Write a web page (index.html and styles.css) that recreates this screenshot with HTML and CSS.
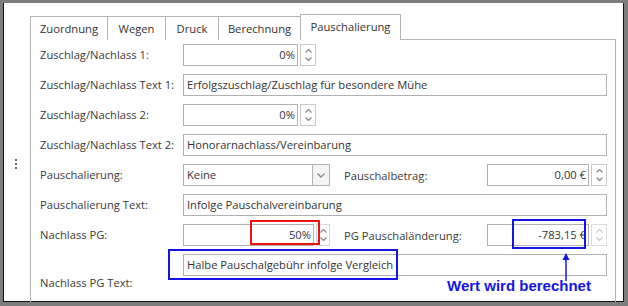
FILE: index.html
```html
<!DOCTYPE html>
<html lang="de">
<head>
  <meta charset="UTF-8">
  <title>Pauschalierung</title>
  <link rel="stylesheet" href="styles.css">
</head>
<body>
  <div class="window">
    <div class="grip">
      <svg width="4" height="12" viewBox="0 0 4 12"><rect x="1" y="0" width="2" height="2"/><rect x="1" y="4" width="2" height="2"/><rect x="1" y="8" width="2" height="2"/></svg>
    </div>

    <div class="tab-area">
      <div class="tabs">
        <div class="tab tab-1">Zuordnung</div>
        <div class="tab tab-2">Wegen</div>
        <div class="tab tab-3">Druck</div>
        <div class="tab tab-4">Berechnung</div>
        <div class="tab tab-5 active">Pauschalierung</div>
      </div>

      <div class="panel">
        <div class="form">
          <label>Zuschlag/Nachlass 1:</label>
          <div class="field short">
            <div class="input num">0%</div>
            <div class="spin">
              <svg width="7" height="4" viewBox="0 0 7 4"><path d="M0.5 3.5 L3.5 0.5 L6.5 3.5"/></svg>
              <svg width="7" height="4" viewBox="0 0 7 4"><path d="M0.5 0.5 L3.5 3.5 L6.5 0.5"/></svg>
            </div>
          </div>

          <label>Zuschlag/Nachlass Text 1:</label>
          <div class="input">Erfolgszuschlag/Zuschlag für besondere Mühe</div>

          <label>Zuschlag/Nachlass 2:</label>
          <div class="field short">
            <div class="input num">0%</div>
            <div class="spin">
              <svg width="7" height="4" viewBox="0 0 7 4"><path d="M0.5 3.5 L3.5 0.5 L6.5 3.5"/></svg>
              <svg width="7" height="4" viewBox="0 0 7 4"><path d="M0.5 0.5 L3.5 3.5 L6.5 0.5"/></svg>
            </div>
          </div>

          <label>Zuschlag/Nachlass Text 2:</label>
          <div class="input">Honorarnachlass/Vereinbarung</div>

          <label>Pauschalierung:</label>
          <div class="field">
            <div class="select">
              <span class="select-text">Keine</span>
              <span class="select-btn">
                <svg width="8" height="5" viewBox="0 0 8 5"><path d="M0.5 0.5 L4 4 L7.5 0.5"/></svg>
              </span>
            </div>
            <span class="sub-label">Pauschalbetrag:</span>
            <div class="input num grow">0,00 €</div>
            <div class="spin">
              <svg width="7" height="4" viewBox="0 0 7 4"><path d="M0.5 3.5 L3.5 0.5 L6.5 3.5"/></svg>
              <svg width="7" height="4" viewBox="0 0 7 4"><path d="M0.5 0.5 L3.5 3.5 L6.5 0.5"/></svg>
            </div>
          </div>

          <label>Pauschalierung Text:</label>
          <div class="input">Infolge Pauschalvereinbarung</div>

          <label>Nachlass PG:</label>
          <div class="field">
            <div class="left-group">
              <div class="input num grow">50%</div>
              <div class="spin narrow">
                <svg width="7" height="4" viewBox="0 0 7 4"><path d="M0.5 3.5 L3.5 0.5 L6.5 3.5"/></svg>
                <svg width="7" height="4" viewBox="0 0 7 4"><path d="M0.5 0.5 L3.5 3.5 L6.5 0.5"/></svg>
              </div>
            </div>
            <span class="sub-label">PG Pauschaländerung:</span>
            <div class="input num grow">-783,15 €</div>
            <div class="spin disabled">
              <svg width="7" height="4" viewBox="0 0 7 4"><path d="M0.5 3.5 L3.5 0.5 L6.5 3.5"/></svg>
              <svg width="7" height="4" viewBox="0 0 7 4"><path d="M0.5 0.5 L3.5 3.5 L6.5 0.5"/></svg>
            </div>
          </div>

          <label class="low">Nachlass PG Text:</label>
          <div class="input">Halbe Pauschalgebühr infolge Vergleich</div>
        </div>
      </div>
    </div>

    <!-- annotations drawn over the screenshot -->
    <div class="mark red mark-rabatt"></div>
    <div class="mark blue mark-wert"></div>
    <div class="mark blue mark-text"></div>
    <svg class="arrow" width="10" height="28" viewBox="0 0 10 28">
      <path d="M5 0 L8.5 7 L1.5 7 Z" fill="#1414e6"/>
      <line x1="5" y1="6" x2="5" y2="28" stroke="#1414e6" stroke-width="1.5"/>
    </svg>
    <div class="note">Wert wird berechnet</div>
  </div>
</body>
</html>
```

FILE: styles.css
```css
* {
  box-sizing: border-box;
}
body {
  margin: 0;
  background: #fff;
  font-family: "Open Sans", "Noto Sans", sans-serif;
  font-size: 11.2px;
  color: #3a3a3a;
}
.window {
  position: relative;
  width: 628px;
  height: 306px;
  display: flex;
  border-top: 3px solid #7d7d7d;
  border-left: 3px solid #7d7d7d;
  border-right: 4px solid #7d7d7d;
  border-bottom: 4px solid #7d7d7d;
  box-shadow: inset 1px 0 0 #111, inset -1px 0 0 #111, inset 0 -1px 0 #111;
  overflow: hidden;
}
.grip {
  width: 27px;
  flex: none;
  display: flex;
  justify-content: center;
  padding-top: 156px;
  padding-right: 2px;
}
.grip svg {
  fill: #6a6a6a;
}
.tab-area {
  flex: 1;
  display: flex;
  flex-direction: column;
  padding-top: 11px;
  margin-right: 8px;
}
.tabs {
  display: flex;
  align-items: flex-end;
  height: 26px;
  margin-bottom: -1px;
  position: relative;
  z-index: 1;
}
.tab {
  height: 24px;
  border: 1px solid #b4b4b4;
  border-bottom: none;
  background: #fff;
  display: flex;
  align-items: center;
  justify-content: center;
  margin-right: -1px;
  color: #333;
}
.tab-1 { width: 78px; }
.tab-2 { width: 59px; }
.tab-3 { width: 54px; }
.tab-4 { width: 83px; }
.tab-5 { width: 101px; }
.tab.active {
  height: 26px;
  padding-bottom: 2px;
}
.panel {
  flex: 1;
  border: 1px solid #b4b4b4;
  border-bottom: none;
  padding: 4px 8px 0 9px;
}
.form {
  display: grid;
  grid-template-columns: 143px 1fr;
  row-gap: 8px;
  align-items: start;
}
.form label {
  line-height: 22px;
  white-space: nowrap;
}
.form label.low {
  padding-top: 18px;
}
.input {
  height: 22px;
  border: 1px solid #b1b1b1;
  padding: 0 3px;
  line-height: 20px;
  white-space: nowrap;
  overflow: hidden;
  color: #333;
}
.input.num {
  text-align: right;
  padding-right: 2px;
}
.grow {
  flex: 1;
}
.field {
  display: flex;
  align-items: center;
  height: 22px;
}
.field.short .input {
  width: 115px;
  margin-right: 2px;
}
.spin {
  width: 16px;
  height: 22px;
  border: 1px solid #c9c9c9;
  display: flex;
  flex-direction: column;
  justify-content: space-between;
  align-items: center;
  padding: 4px 0;
  margin-left: 2px;
}
.field.short .spin {
  margin-left: 0;
}
.spin svg path,
.select-btn svg path {
  fill: none;
  stroke: #8a8a8a;
  stroke-width: 1.3;
}
.spin.narrow {
  width: 14px;
  border-color: #d6d6d6;
}
.spin.disabled {
  border-color: #dcdcdc;
}
.spin.disabled svg path {
  stroke: #c8c8c8;
}
.select {
  width: 147px;
  height: 22px;
  display: flex;
  border: 1px solid #b1b1b1;
}
.select-text {
  flex: 1;
  padding-left: 3px;
  line-height: 20px;
  color: #333;
}
.select-btn {
  width: 17px;
  border-left: 1px solid #b1b1b1;
  display: flex;
  align-items: center;
  justify-content: center;
  background: #f4f4f4;
}
.left-group {
  width: 147px;
  display: flex;
}
.sub-label {
  width: 143px;
  margin-left: 14px;
  white-space: nowrap;
}
.mark {
  position: absolute;
  border: 2px solid;
}
.red {
  border-color: #ee1111;
}
.blue {
  border-color: #1414e6;
}
.mark-rabatt {
  left: 247px;
  top: 217px;
  width: 70px;
  height: 25px;
}
.mark-wert {
  left: 509px;
  top: 216px;
  width: 74px;
  height: 30px;
}
.mark-text {
  left: 165px;
  top: 246px;
  width: 230px;
  height: 31px;
}
.arrow {
  position: absolute;
  left: 558px;
  top: 250px;
}
.note {
  position: absolute;
  left: 444px;
  top: 274px;
  font-family: "Liberation Sans", Arial, sans-serif;
  font-weight: bold;
  font-size: 15px;
  color: #1414e6;
}
```
